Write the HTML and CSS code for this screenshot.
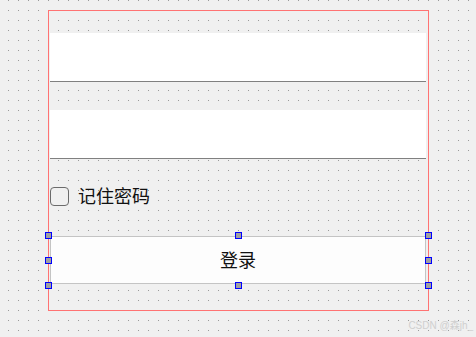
FILE: index.html
```html
<!DOCTYPE html>
<html lang="zh-CN">

<head>
  <meta charset="UTF-8">
  <meta name="viewport" content="width=device-width, initial-scale=1.0">
  <title>登录</title>
  <link rel="stylesheet" href="styles.css">
</head>

<body>
  <div class="form">
    <div class="field"></div>
    <div class="field"></div>

    <label class="remember">
      <span class="box"></span>
      <span class="label">记住密码</span>
    </label>

    <div class="selected">
      <button class="login">登录</button>
      <span class="handle tl"></span>
      <span class="handle tm"></span>
      <span class="handle tr"></span>
      <span class="handle ml"></span>
      <span class="handle mr"></span>
      <span class="handle bl"></span>
      <span class="handle bm"></span>
      <span class="handle br"></span>
    </div>
  </div>

  <div class="watermark">CSDN @森jh_</div>
</body>

</html>
```

FILE: styles.css
```css
html,
body {
  margin: 0;
  height: 100%;
}

body {
  position: relative;
  overflow: hidden;
  background-color: #f0f0f0;
  /* designer dot grid, one dot every 10px */
  background-image: conic-gradient(from 270deg at 1px 1px, #9a9a9a 90deg, transparent 0);
  background-size: 10px 10px;
  background-position: 8px 0;
  font-family: "Noto Sans CJK SC", "DejaVu Sans", sans-serif;
}

.form {
  width: 381px;
  height: 301px;
  box-sizing: border-box;
  margin: 10px 0 0 48px;
  padding: 22px 2px 0 1px;
  border: 1px solid #ff7373;

  display: flex;
  flex-direction: column;
}

.field {
  height: 49px;
  box-sizing: border-box;
  background: #fff;
  border-bottom: 1px solid #808080;
  margin-bottom: 28px;
}

.remember {
  display: flex;
  align-items: center;
  gap: 9px;
  height: 19px;
  margin-bottom: 30px;
}

.box {
  width: 19px;
  height: 19px;
  box-sizing: border-box;
  border: 1px solid #6b6b6b;
  border-radius: 4px;
  background: #f0f0f0;
}

.label {
  font-size: 18px;
  line-height: 19px;
  color: #111;
  margin-top: -2px;
}

.selected {
  position: relative;
  height: 48px;
}

.login {
  width: 100%;
  height: 100%;
  box-sizing: border-box;
  margin: 0;
  padding: 0 0 3px;
  border: 1px solid #c4c4c4;
  border-radius: 0;
  background: #fdfdfd;
  font-family: inherit;
  font-size: 18px;
  color: #111;
}

.handle {
  position: absolute;
  z-index: 1;
  width: 7px;
  height: 7px;
  box-sizing: border-box;
  border: 1px solid #0000ff;
  background: #a0a0a0;
}

.tl, .tm, .tr { top: -4px; }
.ml, .mr { top: 21px; }
.bl, .bm, .br { top: 46px; }
.tl, .ml, .bl { left: -5px; }
.tm, .bm { left: 185px; }
.tr, .mr, .br { right: -6px; }

.watermark {
  position: absolute;
  right: 3px;
  bottom: 5px;
  font-family: "Liberation Sans", "Noto Sans CJK SC", sans-serif;
  font-size: 10px;
  color: #cfcfcf;
}
```
